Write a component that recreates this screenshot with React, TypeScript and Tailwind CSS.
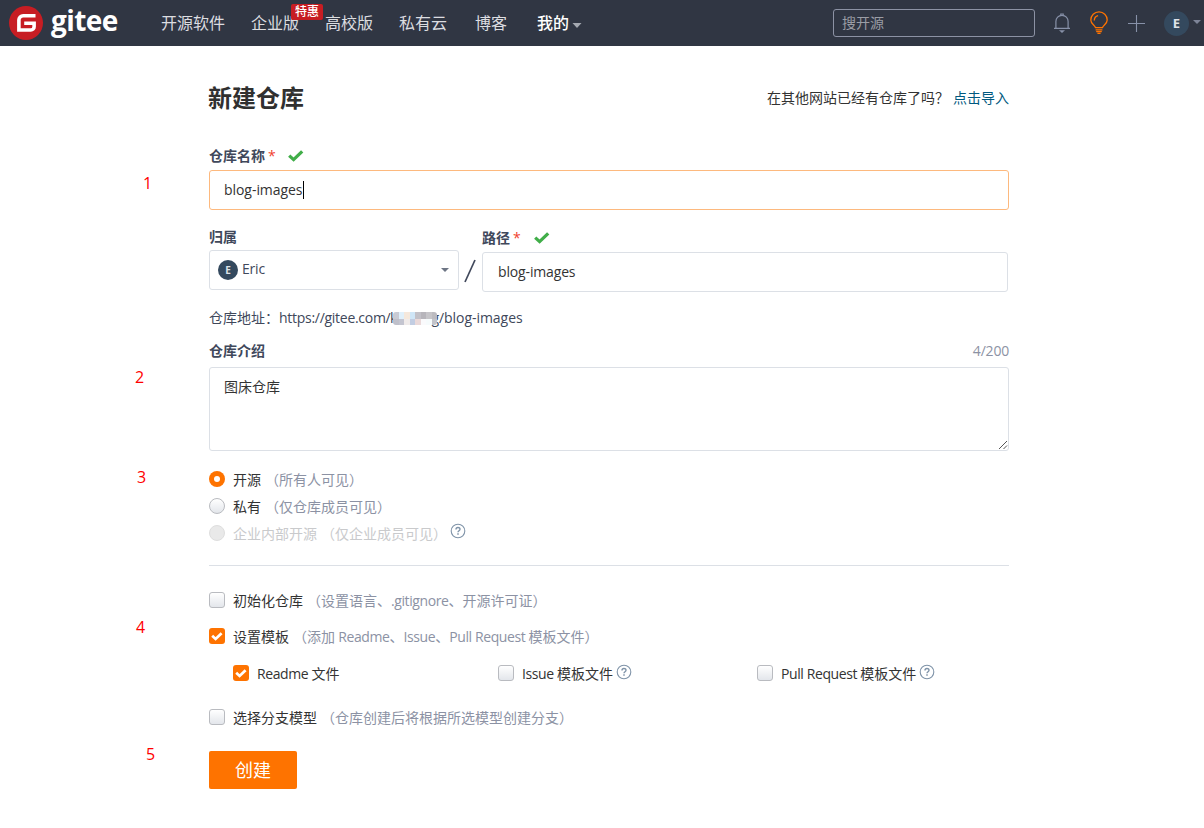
import React, { useState } from "react";
import type { ReactNode } from "react";

const font =
  "font-['Open_Sans','Noto_Sans_CJK_SC',sans-serif] tracking-normal";

function GreenCheck() {
  return (
    <svg width="16" height="12" viewBox="0 0 16 12" className="shrink-0">
      <path d="M1.2 5.6 L5.6 9.6 L14.2 1.400" fill="none" stroke="#41ae49" strokeWidth="3.300" />
    </svg>
  );
}

function Help() {
  return (
    <svg width="16" height="16" viewBox="0 0 16 16" className="shrink-0" fill="none" stroke="#7f93a8">
      <circle cx="8" cy="8" r="6.800" strokeWidth="1.1" />
      <path d="M6 6.5c0-2.7 4-2.6 4-.3 0 1.5-2 1.5-2 3.1" strokeWidth="1.4" />
      <path d="M8 10.3v1.5" strokeWidth="1.5" />
    </svg>
  );
}

/* Latin runs are set slightly tighter than the Chinese text around them. */
function Mixed({ text }: { text: string }) {
  return (
    <>
      {text.split(/([A-Za-z. ]+)/).map((part, i) =>
        i % 2 ? (
          <span key={i} className="tracking-[-0.4px]">{part}</span>
        ) : (
          part
        ),
      )}
    </>
  );
}

function Radio({ checked, disabled }: { checked?: boolean; disabled?: boolean }) {
  if (checked) {
    return (
      <span className="flex size-4 shrink-0 items-center justify-center rounded-full bg-[#fe7300]">
        <span className="size-1.5 rounded-full bg-white" />
      </span>
    );
  }
  return disabled ? (
    <span className="size-4 shrink-0 rounded-full border border-[#dedede] bg-[#e9e9e9]" />
  ) : (
    <span className="size-4 shrink-0 rounded-full border border-[#b9bbc0] bg-linear-to-b from-white to-[#e3e6eb]" />
  );
}

function Checkbox({ initial = false }: { initial?: boolean }) {
  const [on, setOn] = useState(initial);
  return (
    <button
      type="button"
      onClick={() => setOn(!on)}
      className={
        on
          ? "flex size-4 shrink-0 items-center justify-center rounded-[3px] bg-[#fe7300]"
          : "flex size-4 shrink-0 items-center justify-center rounded-[3px] border border-[#b9bbc0] bg-linear-to-b from-white to-[#e3e6eb]"
      }
    >
      {on && (
        <svg width="16" height="16" viewBox="0 0 16 16">
          <path d="M3.2 7.800 L6.6 11 L12.600 5.200" fill="none" stroke="#fff" strokeWidth="2.700" />
        </svg>
      )}
    </button>
  );
}

function Option({ control, label, hint, disabled, children }: {
  control: ReactNode;
  label: string;
  hint?: string;
  disabled?: boolean;
  children?: ReactNode;
}) {
  return (
    <div className="flex h-4 items-center whitespace-nowrap leading-4">
      {control}
      <span className={disabled ? "ml-2 pt-px text-[#c9cacc]" : "ml-2 pt-px text-[#333]"}>
        <Mixed text={label} />
      </span>
      {hint && (
        <span className={disabled ? "ml-1 pt-px text-[#c9cacc]" : "ml-1 pt-px text-[#8c92a4]"}>
          <Mixed text={hint} />
        </span>
      )}
      {children}
    </div>
  );
}

function Caret({ className }: { className: string }) {
  return (
    <svg width="8" height="4" viewBox="0 0 8 4" className={className}>
      <path d="M0 0h8L4 4z" fill="currentColor" />
    </svg>
  );
}

function Header() {
  return (
    <header className="flex h-[46px] items-center bg-[#303643] text-[16px] leading-6 whitespace-nowrap text-[#dcdde0]">
      <div className="ml-[9px] flex w-[152px] items-center">
        <svg width="34" height="34" viewBox="0 0 34 34">
          <circle cx="17" cy="17" r="17" fill="#c71d23" />
          <path
            d="M26.5 9.8H14.2A4.3 4.3 0 0 0 9.9 14.1V24H21.8A3.3 3.3 0 0 0 25.1 20.7V17.2H15.2"
            fill="none"
            stroke="#fff"
            strokeWidth="3.6"
          />
        </svg>
        <span className="-mt-[7px] ml-2 text-[28px] leading-[34px] font-bold tracking-[-0.6px] text-white">gitee</span>
      </div>
      <nav className="flex items-center">
        <a className="w-[90px]">开源软件</a>
        <a className="relative w-[74px]">
          企业版
          <span className="absolute -top-[7px] left-[40px] z-10 flex h-4 w-8 items-center justify-center rounded-[2px] bg-[#c71d23] text-[12px] leading-4 font-medium text-white">
            特惠
          </span>
        </a>
        <a className="w-[74px]">高校版</a>
        <a className="w-[76px]">私有云</a>
        <a className="w-[62px]">博客</a>
        <a className="flex items-center font-medium text-white">
          我的
          <svg width="10" height="5" viewBox="0 0 10 5" className="mt-[5px] ml-[3px]">
            <path d="M0.500 0h9L5 5z" fill="#a5a9b1" />
          </svg>
        </a>
      </nav>
      <div className="ml-auto flex items-center">
        <div className="flex h-7 w-[202px] items-center rounded-[3px] border border-[#8c92a4] pl-2 text-[14px] text-[#9a9da5]">
          搜开源
        </div>
        <svg width="18" height="22" viewBox="0 0 18 22" fill="none" className="ml-[18px]">
          <path d="M2.9 16V9.5C2.9 6 5.4 3.3 9 3.3s6.100 2.700 6.100 6.200V16" stroke="#8791a8" strokeWidth="1.2" />
          <path d="M1 16.400h16M7.800 3.200V2h2.400v1.200" stroke="#8791a8" strokeWidth="1.200" />
          <path d="M6 18.300h6L9 21z" fill="#8791a8" />
        </svg>
        <svg width="20" height="24" viewBox="0 0 20 24" fill="none" stroke="#fe7300" strokeWidth="1.300" className="ml-[18px]">
          <path d="M6.500 16.700C6 14.300 1.800 13 1.800 9a8.200 8.200 0 0 1 16.400 0c0 4-4.200 5.300-4.700 7.700z" />
          <path d="M5.300 9.500c0-2.800 1.400-4.400 3.800-4.900M6.600 18.800h6.800M7.200 20.700h5.600M8.400 22.300h3.200" />
        </svg>
        <svg width="17" height="17" viewBox="0 0 17 17" stroke="#8791a8" strokeWidth="1.100" className="ml-[19px]">
          <path d="M0 8.500h17M8.500 0v17" />
        </svg>
        <span className="ml-[19px] flex size-[25px] items-center justify-center rounded-full bg-[#34495e] text-[13px] font-bold text-[#dfe3e8]">
          E
        </span>
        <Caret className="-mt-[3px] mr-[3px] ml-1 text-[#7d8498]" />
      </div>
    </header>
  );
}

const mosaic = [
  "bg-[#c9cbd4]", "bg-[#e0f0fb]", "bg-[#f5e8dc]", "bg-[#cfe6f7]", "bg-[#c2c1c8]", "bg-[#b7b5bb]", "bg-[#c6c5c9]", "bg-[#bcbbc0]",
  "bg-[#bfc0ca]", "bg-[#c4c5d0]", "bg-[#f0ebea]", "bg-[#c2cde2]", "bg-[#ead9d9]", "bg-[#fafafc]", "bg-[#f6fbfc]", "bg-[#c3c4ca]",
];

function Notes() {
  return (
    <aside className="flex w-[209px] shrink-0 flex-col text-[16px] leading-5 text-[#ff0000]">
      <span className="mt-[127px] ml-[143px]">1</span>
      <span className="mt-[174px] ml-[135px]">2</span>
      <span className="mt-[80px] ml-[137px]">3</span>
      <span className="mt-[130px] ml-[136px]">4</span>
      <span className="mt-[107px] ml-[146px]">5</span>
    </aside>
  );
}

const labelClass = "flex h-5 items-center font-bold text-[#40485b]";

export default function App() {
  return (
    <div className={`${font} min-h-[828px] w-full bg-white text-[14px] leading-5 text-[#333]`}>
      <Header />
      <div className="flex">
        <Notes />
        <main className="flex w-[800px] shrink-0 flex-col pt-[28px]">
          <div className="flex h-12 items-center justify-between">
            <h1 className="-ml-px text-[24px] leading-8 font-bold text-[#303030]">新建仓库</h1>
            <p>
              在其他网站已经有仓库了吗？
              <a className="ml-1 text-[#005980]">点击导入</a>
            </p>
          </div>

          <label className={`${labelClass} mt-[24px]`}>
            仓库名称
            <span className="mr-[14px] ml-[3px] w-[6px] font-normal text-[#f0412e]">*</span>
            <GreenCheck />
          </label>
          <div className="mt-1 flex h-10 items-center rounded-[3px] border border-[#fdb97e] pl-[14px]">
            <span className="tracking-[-0.05px]">blog-images</span>
            <span className="h-[18px] w-px bg-black" />
          </div>

          <div className="mt-[17px] flex">
            <div className="w-[250px]">
              <label className={labelClass}>归属</label>
              <div className="mt-[3px] flex h-10 items-center rounded-[3px] border border-[#dce0e6] pr-[9px] pl-2 text-[#40485b]">
                <span className="flex size-5 items-center justify-center rounded-full bg-[#34495e] text-[10px] font-bold text-[#dfe3e8]">
                  E
                </span>
                <span className="-mt-[2px] ml-1 tracking-[-0.2px]">Eric</span>
                <Caret className="ml-auto text-[#6d7584]" />
              </div>
            </div>
            <div className="flex w-[23px] pt-[31px] pl-[5px]">
              <svg width="12" height="24" viewBox="0 0 12 24" className="mt-px">
                <path d="M1 23 L11 1" stroke="#40485b" strokeWidth="1.700" />
              </svg>
            </div>
            <div className="w-[526px] pt-px">
              <label className={labelClass}>
                路径
                <span className="mr-[15px] ml-[3px] w-[6px] font-normal text-[#f0412e]">*</span>
                <GreenCheck />
              </label>
              <div className="mt-1 flex h-10 items-center rounded-[3px] border border-[#dce0e6] pl-[15px]">
                <span className="tracking-[-0.15px]">blog-images</span>
              </div>
            </div>
          </div>

          <div className="mt-4 flex h-5 items-center text-[#40485b]">
            <span className="w-[70px]">仓库地址：</span>
            <span className="w-[111px] tracking-[-0.28px]">https://gitee.com/</span>
            <span className="relative flex w-[49px] justify-between">
              <span>k</span>
              <span>g</span>
              <span className="absolute top-[4px] left-[3px] grid h-[13px] w-[44px] grid-cols-8 overflow-hidden rounded-[3px]">
                {mosaic.map((c, i) => (
                  <span key={i} className={c} />
                ))}
              </span>
            </span>
            <span className="tracking-[-0.05px]">/blog-images</span>
          </div>

          <div className="mt-[13px] flex h-5 items-center justify-between">
            <span className={labelClass}>仓库介绍</span>
            <span className="tracking-[-0.2px] text-[#8c92a4]">4/200</span>
          </div>
          <div className="mt-[6px] flex h-[84px] justify-between rounded-[3px] border border-[#dce0e6] pt-[9px] pl-[14px]">
            <span>图床仓库</span>
            <svg width="10" height="10" viewBox="0 0 10 10" stroke="#555" className="self-end">
              <path d="M1 9L9 1M5.500 9L9 5.500" />
            </svg>
          </div>

          <div className="mt-5 flex flex-col gap-[11px]">
            <Option control={<Radio checked />} label="开源" hint="（所有人可见）" />
            <Option control={<Radio />} label="私有" hint="（仅仓库成员可见）" />
            <Option control={<Radio disabled />} label="企业内部开源" hint="（仅企业成员可见）" disabled>
              <span className="-mt-[4px] ml-[3px]"><Help /></span>
            </Option>
          </div>

          <hr className="mt-6 border-[#dce0e6]" />

          <div className="mt-[26px] flex flex-col">
            <Option control={<Checkbox />} label="初始化仓库" hint="（设置语言、.gitignore、开源许可证）" />
            <div className="mt-5">
              <Option control={<Checkbox initial />} label="设置模板" hint="（添加 Readme、Issue、Pull Request 模板文件）" />
            </div>
            <div className="mt-[21px] flex pl-6">
              <div className="w-[265px]">
                <Option control={<Checkbox initial />} label="Readme 文件" />
              </div>
              <div className="w-[259px]">
                <Option control={<Checkbox />} label="Issue 模板文件">
                  <span className="-mt-[2px] ml-[3px]"><Help /></span>
                </Option>
              </div>
              <Option control={<Checkbox />} label="Pull Request 模板文件">
                <span className="-mt-[2px] ml-[3px]"><Help /></span>
              </Option>
            </div>
            <div className="mt-7">
              <Option control={<Checkbox />} label="选择分支模型" hint="（仓库创建后将根据所选模型创建分支）" />
            </div>
          </div>

          <button type="button" className="mt-[26px] h-[38px] w-[88px] rounded-[2px] bg-[#fe7300] text-[18px] leading-6 text-white">
            创建
          </button>
        </main>
      </div>
    </div>
  );
}
